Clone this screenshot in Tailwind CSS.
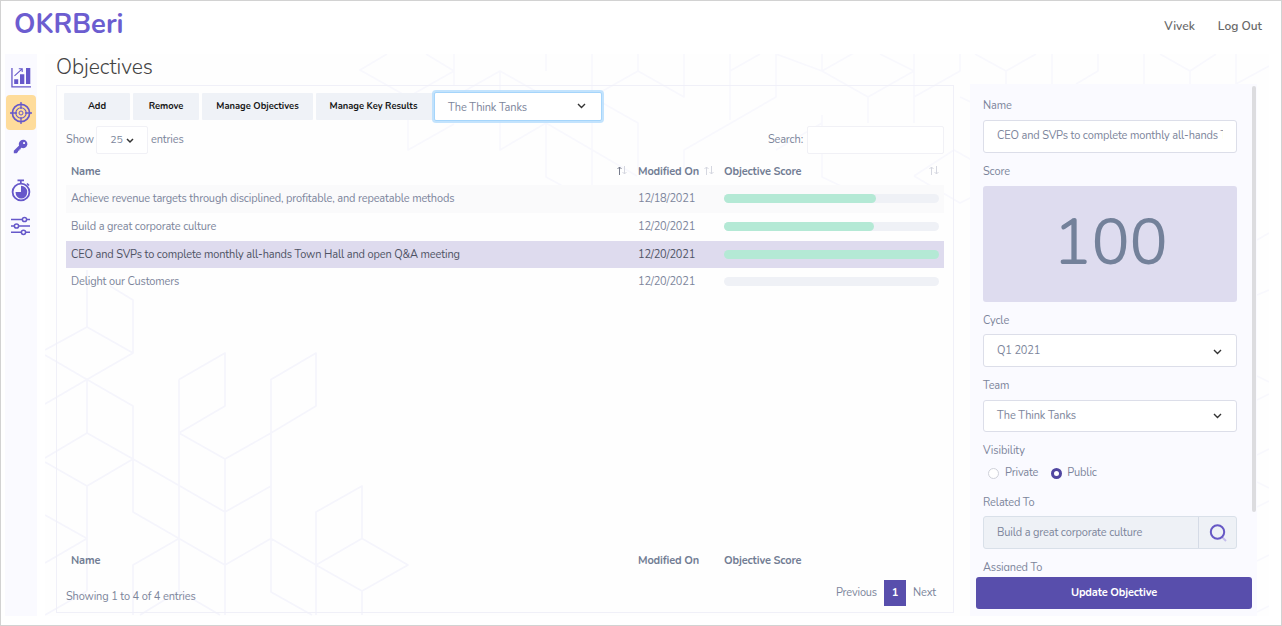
<!DOCTYPE html>
<html lang="en">
<head>
<meta charset="utf-8">
<title>OKRBeri - Objectives</title>
<script src="https://cdn.jsdelivr.net/npm/@tailwindcss/browser@4"></script>
</head>
<body class="bg-white">
<div class="relative flex h-[626px] w-[1282px] flex-col overflow-hidden border border-[#d2d2d2] bg-white font-['Nunito','Lato',sans-serif] text-[11px] leading-4 tracking-[-0.150px] text-[#7c859b]">

  <header class="flex h-[53px] shrink-0 justify-between pl-[13px] pr-[19px] tracking-normal">
    <div class="pt-[5px] text-[27.300px] leading-9 font-bold text-[#6c5dd0]">OKRBeri</div>
    <nav class="flex gap-[23px] pt-[17px] text-[12px] font-semibold text-[#686868]">
      <a>Vivek</a><a>Log Out</a>
    </nav>
  </header>

  <div class="flex h-[562px] pl-1">
    <aside class="flex w-8 shrink-0 flex-col items-center bg-[#fafaff] pr-px text-[#6658ca]">
      <div class="flex h-[41px] w-full items-end justify-center pb-[7px]">
        <svg class="h-[21px] w-5" viewBox="0 0 20 21" fill="currentColor"><path d="M.3 1h1.300v18.200H20v1.300H.3zM3.200 12.200h4V17h-4zM9 7.300h4.300V17H9zM15 1h4.300v16H15z"/><path d="M3.500 8.800 10.600 2.300M7.800 1.700h3.400v3.400" fill="none" stroke="currentColor" stroke-width="1.100"/></svg>
      </div>
      <div class="flex h-[35px] w-[30px] items-center justify-center rounded-[4px] bg-[#fedc9b]">
        <svg class="size-[22px]" viewBox="0 0 22 22" fill="none" stroke="currentColor"><circle cx="11" cy="11" r="8.600" stroke-width="1.700"/><circle cx="11" cy="11" r="5.200" stroke-width="1.100"/><circle cx="11" cy="11" r="2" stroke-width="1"/><path d="M11 0v7M11 15v7M0 11h7M15 11h7" stroke-width="1.300"/></svg>
      </div>
      <div class="flex h-[33px] items-center justify-center">
        <svg class="size-[15px]" viewBox="0 0 15 15"><path fill="currentColor" fill-rule="evenodd" d="M10 .8a4.200 4.200 0 1 1-1.600 8L7.500 9.700v.9H6.300v1.100H5.100v1.100L3.700 14.200H.8v-2.400L6.100 6.500A4.200 4.200 0 0 1 10 .8zM11 3.100a1 1 0 1 0 .1 2 1 1 0 0 0-.1-2z"/></svg>
      </div>
      <div class="flex h-[55px] items-center justify-center">
        <svg class="h-[23px] w-5" viewBox="0 0 20 23"><path fill="none" stroke="currentColor" stroke-width="1.700" d="M6.500 1.400h6.500M9.800 1v4M16 4.500l2 2"/><circle cx="10" cy="13" r="8.400" fill="none" stroke="currentColor" stroke-width="1.800"/><path fill="currentColor" d="M10 13H4.500a5.500 6.200 0 0 0 11.700 0A6.200 6.200 0 0 0 10 6.800z"/></svg>
      </div>
      <svg class="mt-[-2px] h-5 w-[19px]" viewBox="0 0 19 20" fill="none" stroke="currentColor" stroke-width="1.500"><path d="M0 3.500h11M16 3.500h3M0 10h3M8 10h11M0 16.300h10M15 16.300h4"/><circle cx="13.500" cy="3.500" r="2.100"/><circle cx="5.500" cy="10" r="2.100"/><circle cx="12.500" cy="16.300" r="2.100"/></svg>
    </aside>

    <main class="relative ml-2 flex w-[1224px] bg-[#fefefe]">
      <!-- isometric cube line pattern behind the content -->
      <svg class="absolute inset-0 h-full w-full" viewBox="45 54 1224 562" fill="none" stroke-linejoin="round">
        <g stroke="#f5f5fc" stroke-width="1.700">
          <path d="M87 270V327M110 286 133 300V353L87 379.500 45 355M45 350 87 327 133 353M45 404 87 379.500 133 406V459L87 486 45 462M45 458 87 433 133 459M87 380V433M87 486V591M45 515 87 538.500 45 563M133 459V512L225 565 271 538.500 316 565M133 459 225 512 271 486M179 379.500 225 353V406L179 433V591M179 379.500V433L225 459 271 433V592L312 615M225 459V615M271 433 316 406V353L271 379.500V433M225 512 271 486M316 615V512L362 486V538.500L408 565 362 591V615M362 591 316 565 362 538.500M133 615V565L179 538.500M45 615 87 591M140 615 179 591 220 615"/>
        </g>
        <g stroke="#f8f8fd" stroke-width="1.700">
          <path d="M387 54 360 70 408 97 454 71 426 54M454 54V85M408 97V150L454 124M500 72V150L546 123 637 176M454 97 500 71 546 97M546 71V54M546 123V177L570 190M592 54V185M592 97 638 123V170M592 97 638 71V54M638 71 684 97V54M684 170V150L776 97V54M730 54V120M730 71 760 54M776 54 822 71 868 97 914 71 880 54M822 54V71L868 45M868 97V123M914 54V123M822 115V177L860 195M776 150 822 123M914 176 954 150 1000 176M914 176 960 203 990 188M914 97 960 71V54M960 97 975 104M975 54 1006 71 1036 54M1006 71V84M1052 54V84M1076 84 1098 71V54M1144 54V84M1160 54 1190 71 1216 54M1190 71V84M1236 54V84M1236 84 1269 66M1257 240 1269 233M1257 295 1269 290M1257 376 1269 382M1257 400 1269 394M1257 455 1269 449M1257 482 1269 488M1257 507 1269 501M1257 561 1269 555M1257 612 1269 606"/>
        </g>
      </svg>

      <section class="relative ml-[11px] w-[898px]">
        <h1 class="h-[31px] text-[21.100px] leading-[26px] font-light tracking-[-0.050px] text-[#444]">Objectives</h1>
        <div class="flex h-[528px] flex-col border border-[#f0f0f8] px-[9px]">
          <div class="-ml-0.5 flex h-[35px] items-start gap-[3px] pt-[7px] text-[9.350px] font-bold tracking-normal text-[#161616]">
            <button class="h-[27px] w-[66px] rounded-[1px] bg-[#eff2f7] pb-[2px]">Add</button>
            <button class="h-[27px] w-[66px] rounded-[1px] bg-[#eff2f7] pb-[2px]">Remove</button>
            <button class="h-[27px] w-[111px] rounded-[1px] bg-[#eff2f7] pb-[2px]">Manage Objectives</button>
            <button class="h-[27px] w-[119px] rounded-[1px] bg-[#eff2f7] pr-1 pb-[2px]">Manage Key Results</button>
            <div class="-mt-px -ml-[4px] flex h-[29px] w-[168px] items-center justify-between rounded-[2px] border border-[#a5d5fb] bg-white pl-[13px] pr-[15px] pt-[3px] text-[11px] font-normal tracking-[-0.120px] text-[#7c859b] ring-2 ring-[#b4dcfc]/80">The Think Tanks
              <svg class="-mt-1 h-[6px] w-[9px]" viewBox="0 0 9 6" fill="none" stroke="#333" stroke-width="1.400"><path d="M1 1l3.500 3.500L8 1"/></svg>
            </div>
          </div>
          <div class="flex h-[36px] items-center justify-between">
            <div class="flex items-center"><span class="w-[30px] pt-px tracking-[-0.100px]">Show</span>
              <div class="mt-[2px] mr-[3px] flex h-7 w-[52px] items-center justify-center gap-[3px] rounded-[2px] border border-[#f1f1f6] bg-white text-[10.500px]">25 <svg class="mt-[2px] h-[6px] w-2" viewBox="0 0 8 6" fill="none" stroke="#333" stroke-width="1.500"><path d="M1 1l3 3 3-3"/></svg></div>
              <span class="pt-px">entries</span></div>
            <div class="flex items-center gap-[4px]"><span class="pt-px">Search:</span><div class="mt-[2px] h-7 w-[137px] rounded-[2px] border border-[#f1f1f6] bg-white"></div></div>
          </div>

          <div class="grid h-7 grid-cols-[567px_86px_1fr] items-center pt-px pl-[5px] font-bold text-[#727d94]">
            <div class="flex items-center justify-between pr-[11px]">Name
              <svg class="mt-[-2px] h-[9px] w-[10px]" viewBox="0 0 10 9" fill="none" stroke-width="1"><path stroke="#777c8c" d="M2.500 9V1M.5 3l2-2 2 2"/><path stroke="#d5d7e0" d="M7.500 0v8M5.500 6l2 2 2-2"/></svg></div>
            <div class="flex items-center justify-between pr-[10px]">Modified On
              <svg class="mt-[-2px] h-[9px] w-[10px]" viewBox="0 0 10 9" fill="none" stroke="#d5d7e0"><path d="M2.500 9V1M.5 3l2-2 2 2M7.500 0v8M5.500 6l2 2 2-2"/></svg></div>
            <div class="flex items-center justify-between pr-[5px]">Objective Score
              <svg class="mt-[-2px] h-[9px] w-[10px]" viewBox="0 0 10 9" fill="none" stroke="#d5d7e0"><path d="M2.500 9V1M.5 3l2-2 2 2M7.500 0v8M5.500 6l2 2 2-2"/></svg></div>
          </div>
          <div class="grid h-7 grid-cols-[567px_86px_215px] items-center bg-[#fafafb] pl-[5px]">
            <span>Achieve revenue targets through disciplined, profitable, and repeatable methods</span><span class="tracking-[-0.200px]">12/18/2021</span>
            <div class="mb-px h-[9px] rounded-full bg-[#eff1f6]"><div class="h-full w-[152px] rounded-full bg-[#b4e9d5]"></div></div>
          </div>
          <div class="grid h-7 grid-cols-[567px_86px_215px] items-center pl-[5px]">
            <span>Build a great corporate culture</span><span class="tracking-[-0.200px]">12/20/2021</span>
            <div class="mb-px h-[9px] rounded-full bg-[#eff1f6]"><div class="h-full w-[150px] rounded-full bg-[#b4e9d5]"></div></div>
          </div>
          <div class="grid h-[27px] grid-cols-[567px_86px_215px] items-center bg-[#dedbee] pl-[5px] text-[#4e5364]">
            <span>CEO and SVPs to complete monthly all-hands Town Hall and open Q&amp;A meeting</span><span class="tracking-[-0.200px]">12/20/2021</span>
            <div class="h-[9px] rounded-full bg-[#b4e9d5]"></div>
          </div>
          <div class="grid h-7 grid-cols-[567px_86px_215px] items-center pl-[5px]">
            <span>Delight our Customers</span><span class="tracking-[-0.200px]">12/20/2021</span>
            <div class="mb-px h-[9px] rounded-full bg-[#eff1f6]"></div>
          </div>
          <div class="mt-auto grid h-7 grid-cols-[567px_86px_215px] items-center pt-[2px] pl-[5px] font-bold text-[#727d94]">
            <span>Name</span><span>Modified On</span><span>Objective Score</span>
          </div>
          <div class="flex h-[38px] items-start justify-between">
            <span class="pt-[15px]">Showing 1 to 4 of 4 entries</span>
            <div class="mt-[6px] mr-2 flex h-[26px] items-center gap-[7px]"><span>Previous</span><span class="flex h-[26px] w-[22px] items-center justify-center bg-[#584eac] font-bold text-white">1</span><span>Next</span></div>
          </div>
        </div>
      </section>

      <aside class="relative mt-[30px] ml-4 flex h-[532px] w-[287px] flex-col bg-[#fafaff]">
        <div class="h-[487px] overflow-hidden pl-[13px]">
          <div class="mt-[14px]">Name</div>
          <div class="mt-[6px] h-[33px] w-[254px] rounded-[3px] border border-[#dcdee9] bg-white px-[13px] pt-[7px]"><div class="h-5 overflow-hidden whitespace-nowrap">CEO and SVPs to complete monthly all-hands Town Hall</div></div>
          <div class="mt-[11px]">Score</div>
          <div class="mt-[6px] h-[116px] w-[254px] rounded-[3px] bg-[#dedcef] pl-px text-center text-[63.700px] leading-[115px] tracking-normal text-[#73819a]">100</div>
          <div class="mt-[11px]">Cycle</div>
          <div class="mt-[5px] flex h-[33px] w-[254px] items-center justify-between rounded-[3px] border border-[#dcdee9] bg-white pl-[13px] pr-[14px]">Q1 2021<svg class="mt-[2px] h-[6px] w-[9px]" viewBox="0 0 9 6" fill="none" stroke="#333" stroke-width="1.400"><path d="M1 1l3.500 3.500L8 1"/></svg></div>
          <div class="mt-[11px]">Team</div>
          <div class="mt-[6px] flex h-8 w-[254px] items-center justify-between rounded-[3px] border border-[#dcdee9] bg-white pl-[13px] pr-[14px] tracking-[-0.120px]">The Think Tanks<svg class="h-[6px] w-[9px]" viewBox="0 0 9 6" fill="none" stroke="#333" stroke-width="1.400"><path d="M1 1l3.500 3.500L8 1"/></svg></div>
          <div class="mt-[11px] tracking-[-0.080px]">Visibility</div>
          <div class="mt-[6px] flex items-center pl-[5px]"><span class="mr-[6px] size-[11px] rounded-full border border-[#cfd1da] bg-white"></span>Private<span class="ml-[13px] mr-[5px] size-[11px] rounded-full border-[3px] border-[#5046a0] bg-white"></span>Public</div>
          <div class="mt-[14px]">Related To</div>
          <div class="mt-[5px] flex h-[33px] w-[254px] rounded-[3px] border border-[#d9e0e9] bg-[#eef1f6]"><span class="flex flex-1 items-center pl-[13px]">Build a great corporate culture</span><span class="flex w-[38px] items-center justify-center border-l border-[#d5dbe6]"><svg class="size-[18px]" viewBox="0 0 18 18" fill="none"><path d="M13 13l4 4" stroke="#c4bdec" stroke-width="2"/><circle cx="8.500" cy="8" r="6.700" stroke="#6658c5" stroke-width="2"/></svg></span></div>
          <div class="mt-[11px]">Assigned To</div>
        </div>
        <button class="mt-[6px] ml-[6px] h-8 w-[276px] shrink-0 rounded-[3px] bg-[#584eac] pb-px font-bold text-white">Update Objective</button>
        <div class="absolute top-[2px] right-[1px] h-[426px] w-1 rounded-full bg-[#dcdcdf]"></div>
      </aside>
    </main>
  </div>
</div>
</body>
</html>
